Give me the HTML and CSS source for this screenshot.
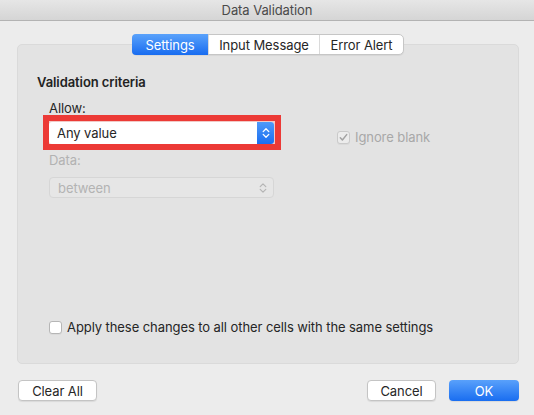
FILE: index.html
```html
<!DOCTYPE html>
<html>
<head>
<meta charset="utf-8">
<link rel="stylesheet" href="styles.css">
</head>
<body>
<div class="window">
  <div class="titlebar">Data Validation</div>
  <div class="content">
    <div class="tabs">
      <span class="tab tab-settings active">Settings</span>
      <span class="tab tab-input">Input Message</span>
      <span class="tab tab-error">Error Alert</span>
    </div>
    <div class="panel">
      <div class="section-title">Validation criteria</div>
      <div class="criteria">
        <div class="col">
          <div class="label">Allow:</div>
          <div class="highlight">
            <div class="select">
              <span class="select-text">Any value</span>
              <span class="stepper">
                <svg width="8" height="12" viewBox="0 0 8 12"><polyline points="1.2,4.6 4,1.8 6.8,4.6" fill="none" stroke="#fff" stroke-width="1.3" stroke-linecap="round" stroke-linejoin="round"/><polyline points="1.2,7.4 4,10.2 6.8,7.4" fill="none" stroke="#fff" stroke-width="1.3" stroke-linecap="round" stroke-linejoin="round"/></svg>
              </span>
            </div>
          </div>
          <div class="label disabled data-label">Data:</div>
          <div class="select disabled-select">
            <span class="select-text">between</span>
            <span class="stepper plain">
              <svg width="8" height="12" viewBox="0 0 8 12"><polyline points="1.2,4.6 4,1.8 6.8,4.6" fill="none" stroke="#b4b4b4" stroke-width="1.2" stroke-linecap="round" stroke-linejoin="round"/><polyline points="1.2,7.4 4,10.2 6.8,7.4" fill="none" stroke="#b4b4b4" stroke-width="1.2" stroke-linecap="round" stroke-linejoin="round"/></svg>
            </span>
          </div>
        </div>
        <div class="check ignore">
          <span class="box box-disabled">
            <svg width="11" height="11" viewBox="0 0 11 11"><polyline points="2.3,5.8 4.4,8 8.7,2.6" fill="none" stroke="#a3a3a3" stroke-width="1.5" stroke-linecap="round" stroke-linejoin="round"/></svg>
          </span>
          <span class="check-text">Ignore blank</span>
        </div>
      </div>
      <div class="check apply">
        <span class="box"></span>
        <span class="check-text">Apply these changes to all other cells with the same settings</span>
      </div>
    </div>
    <div class="buttons">
      <span class="btn btn-clear">Clear All</span>
      <span class="btn-spacer"></span>
      <span class="btn btn-cancel">Cancel</span>
      <span class="btn btn-ok">OK</span>
    </div>
  </div>
</div>
</body>
</html>
```

FILE: styles.css
```css
* { box-sizing: border-box; }
html, body {
  margin: 0;
  padding: 0;
  background: #ececec;
}
body {
  font-family: Inter, "Liberation Sans", Arial, sans-serif;
  font-size: 13px;
  letter-spacing: -0.08px;
  color: #262626;
}
.window {
  width: 534px;
  height: 415px;
  background: #ececec;
  overflow: hidden;
}
.titlebar {
  height: 21px;
  line-height: 21px;
  text-align: center;
  color: #4a4a4a;
  background: linear-gradient(#e6e6e6, #d5d5d5);
  border-bottom: 1px solid #b3b3b3;
}
.content {
  padding: 0 15px 0 17px;
}
.tabs {
  display: flex;
  width: 272px;
  height: 21px;
  margin: 13px auto 0;
  position: relative;
  z-index: 2;
  background: #fff;
  border: 1px solid #c6c6c6;
  border-radius: 5px;
  box-shadow: 0 1px 1px rgba(0,0,0,0.06);
}
.tab {
  display: flex;
  align-items: center;
  justify-content: center;
  height: 100%;
  color: #262626;
  border-left: 1px solid #dadada;
}
.tab-settings { width: 75px; border-left: none; }
.tab-input { width: 111px; }
.tab-error { flex: 1; }
.tab.active {
  color: #fff;
  background: linear-gradient(#5aa2fb, #186cf0);
  border-radius: 4px 0 0 4px;
  margin: -1px 0 -1px -1px;
  height: calc(100% + 2px);
  width: 76px;
}
.panel {
  height: 320px;
  margin-top: -11px;
  background: #e3e3e3;
  border: 1px solid #dadada;
  border-radius: 5px;
  padding: 29px 20px 28px 19px;
  display: flex;
  flex-direction: column;
}
.section-title {
  font-weight: 600;
  line-height: 16px;
  color: #222;
}
.criteria {
  display: flex;
  margin-top: 10px;
  margin-left: 12px;
}
.col {
  width: 225px;
  display: flex;
  flex-direction: column;
}
.label {
  line-height: 16px;
  color: #262626;
}
.label.disabled { color: #b2b2b2; }
.data-label { margin-top: 8px; }
.highlight {
  margin: -1px -7px -6px -6px;
  border: 6px solid #ec3a36;
  padding: 1px 1px 0 0;
  background: #f1c9c6;
}
.select {
  position: relative;
  height: 22px;
  display: flex;
  align-items: center;
  justify-content: space-between;
  background: #fff;
  border-radius: 3px;
}
.select-text { padding-left: 8px; }
.stepper {
  width: 17px;
  height: 100%;
  display: flex;
  align-items: center;
  justify-content: center;
  background: linear-gradient(#4f9af9, #1a6ef0);
  border-radius: 0 3px 3px 0;
}
.stepper.plain { background: none; width: 20px; }
.disabled-select {
  height: 21px;
  margin-top: 9px;
  border-radius: 4px;
  background-color: #e6e6e6;
  background-image: radial-gradient(circle, #eeeeee 0.6px, transparent 0.7px);
  background-size: 4px 4px;
  border: 1px solid #d6d6d6;
  color: #b3b3b3;
}
.disabled-select .select-text { padding-left: 8px; }
.check {
  display: flex;
  align-items: center;
  line-height: 16px;
}
.box {
  width: 13px;
  height: 13px;
  border: 1px solid #b6b6b6;
  border-radius: 3px;
  background: #fff;
  display: flex;
  align-items: center;
  justify-content: center;
  box-shadow: 0 1px 0 rgba(0,0,0,0.04);
}
.box-disabled {
  background: #ececec;
  border-color: #cacaca;
}
.ignore {
  margin-left: 63px;
  margin-top: 29px;
  align-self: flex-start;
  color: #a8a8a8;
}
.ignore .check-text { margin-left: 5px; }
.apply {
  margin-top: auto;
  margin-left: 12px;
}
.apply .check-text { margin-left: 5px; color: #262626; }
.buttons {
  display: flex;
  margin-top: 16px;
  margin-left: 1px;
}
.btn-spacer { flex: 1; }
.btn {
  height: 21px;
  display: flex;
  align-items: center;
  justify-content: center;
  background: #fff;
  border: 1px solid #c4c4c4;
  border-radius: 4px;
  box-shadow: 0 1px 1px rgba(0,0,0,0.08);
  color: #262626;
}
.btn-clear { width: 79px; }
.btn-cancel { width: 69px; }
.btn-ok {
  width: 70px;
  margin-left: 13px;
  color: #fff;
  border: none;
  background: linear-gradient(#59a1fb, #196df0);
}
```
